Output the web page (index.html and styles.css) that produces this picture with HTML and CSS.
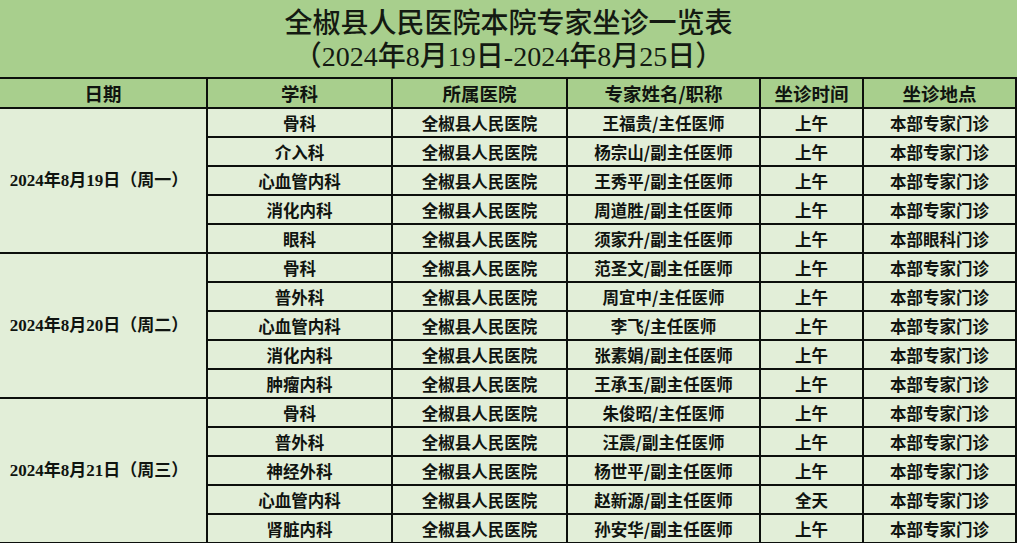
FILE: index.html
```html
<!DOCTYPE html>
<html lang="zh-CN">
<head>
<meta charset="utf-8">
<title>全椒县人民医院本院专家坐诊一览表</title>
<link rel="stylesheet" href="styles.css">
</head>
<body>
<div class="sheet">
  <header class="title">
    <div class="t1">全椒县人民医院本院专家坐诊一览表</div>
    <div class="t2">（2024年8月19日-2024年8月25日）</div>
  </header>
  <table class="grid">
    <colgroup>
      <col class="c1"><col class="c2"><col class="c3"><col class="c4"><col class="c5"><col class="c6">
    </colgroup>
    <thead>
      <tr><th>日期</th><th>学科</th><th>所属医院</th><th>专家姓名/职称</th><th>坐诊时间</th><th>坐诊地点</th></tr>
    </thead>
    <tbody>
      <tr><td class="date" rowspan="5">2024年8月19日（周一）</td><td>骨科</td><td>全椒县人民医院</td><td>王福贵/主任医师</td><td>上午</td><td>本部专家门诊</td></tr>
      <tr><td>介入科</td><td>全椒县人民医院</td><td>杨宗山/副主任医师</td><td>上午</td><td>本部专家门诊</td></tr>
      <tr><td>心血管内科</td><td>全椒县人民医院</td><td>王秀平/副主任医师</td><td>上午</td><td>本部专家门诊</td></tr>
      <tr><td>消化内科</td><td>全椒县人民医院</td><td>周道胜/副主任医师</td><td>上午</td><td>本部专家门诊</td></tr>
      <tr><td>眼科</td><td>全椒县人民医院</td><td>须家升/副主任医师</td><td>上午</td><td>本部眼科门诊</td></tr>
      <tr><td class="date" rowspan="5">2024年8月20日（周二）</td><td>骨科</td><td>全椒县人民医院</td><td>范圣文/副主任医师</td><td>上午</td><td>本部专家门诊</td></tr>
      <tr><td>普外科</td><td>全椒县人民医院</td><td>周宜中/主任医师</td><td>上午</td><td>本部专家门诊</td></tr>
      <tr><td>心血管内科</td><td>全椒县人民医院</td><td>李飞/主任医师</td><td>上午</td><td>本部专家门诊</td></tr>
      <tr><td>消化内科</td><td>全椒县人民医院</td><td>张素娟/副主任医师</td><td>上午</td><td>本部专家门诊</td></tr>
      <tr><td>肿瘤内科</td><td>全椒县人民医院</td><td>王承玉/副主任医师</td><td>上午</td><td>本部专家门诊</td></tr>
      <tr><td class="date" rowspan="5">2024年8月21日（周三）</td><td>骨科</td><td>全椒县人民医院</td><td>朱俊昭/主任医师</td><td>上午</td><td>本部专家门诊</td></tr>
      <tr><td>普外科</td><td>全椒县人民医院</td><td>汪震/副主任医师</td><td>上午</td><td>本部专家门诊</td></tr>
      <tr><td>神经外科</td><td>全椒县人民医院</td><td>杨世平/副主任医师</td><td>上午</td><td>本部专家门诊</td></tr>
      <tr><td>心血管内科</td><td>全椒县人民医院</td><td>赵新源/副主任医师</td><td>全天</td><td>本部专家门诊</td></tr>
      <tr><td>肾脏内科</td><td>全椒县人民医院</td><td>孙安华/副主任医师</td><td>上午</td><td>本部专家门诊</td></tr>
    </tbody>
  </table>
</div>
</body>
</html>
```

FILE: styles.css
```css
html, body {
  margin: 0;
  padding: 0;
  background: #e2eed8;
}

.sheet {
  width: 1017px;
  height: 543px;
  overflow: hidden;
  background: #e2eed8;
}

.title {
  height: 77px;
  background: #a8cf8d;
  display: flex;
  flex-direction: column;
  align-items: center;
  justify-content: center;
  color: #141a12;
  font-family: "Liberation Serif", "Noto Sans CJK SC", serif;
  font-size: 28px;
  font-weight: 500;
  line-height: 33px;
}

.t1 {
  padding-top: 2px;
}

.grid {
  width: 1016px;
  border-collapse: collapse;
  table-layout: fixed;
  font-family: "Noto Sans CJK SC", sans-serif;
  color: #101410;
}

.c1 { width: 207px; }
.c2 { width: 185px; }
.c3 { width: 175px; }
.c4 { width: 193px; }
.c5 { width: 103px; }
.c6 { width: 153px; }

.grid th,
.grid td {
  border: 2px solid #0c0f0c;
  padding: 0;
  text-align: center;
  vertical-align: middle;
  white-space: nowrap;
}

.grid th:first-child,
.grid td.date {
  border-left: none;
}

.grid thead tr {
  height: 30px;
}

.grid th {
  background: #a8cf8d;
  font-size: 18.5px;
  font-weight: 700;
  line-height: 24px;
}

.grid tbody tr {
  height: 29px;
}

.grid td {
  background: #e2eed8;
  font-size: 16.5px;
  font-weight: 700;
  line-height: 22px;
}

.grid td.date {
  font-family: "Liberation Serif", "Noto Sans CJK SC", serif;
  font-size: 17px;
  padding-right: 8px;
}
```
